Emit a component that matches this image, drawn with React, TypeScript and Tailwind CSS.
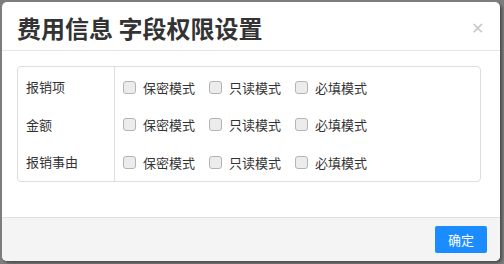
import React from 'react'

const fields = ['报销项', '金额', '报销事由']
const modes = ['保密模式', '只读模式', '必填模式']

const Checkbox: React.FC<{ label: string }> = ({ label }) => (
  <label className="flex items-center">
    <span className="w-[13px] h-[13px] rounded-[3px] border border-[#b4b4b4] bg-[#ececec]" />
    <span className="ml-[7px] text-[13px] text-[#333]">{label}</span>
  </label>
)

export default function App() {
  return (
    <div
      className="w-[504px] h-[264px] bg-[#7d7d7d] pl-[2px] pt-[2px]"
      style={{ fontFamily: '"Noto Sans CJK SC", "Noto Sans", sans-serif' }}
    >
      <div className="w-[498px] h-[259px] bg-white rounded-[5px] overflow-hidden flex flex-col shadow-[2px_2px_3px_rgba(0,0,0,0.4)]">
        <div className="h-[49px] border-b border-[#e5e5e5] flex items-center justify-between pl-[15px] pr-[16px] shrink-0">
          <h1 className="text-[24px] font-bold text-[#333] leading-none pt-[4px]">
            费用信息 字段权限设置
          </h1>
          <span className="text-[16px] text-[#c8c8c8] leading-none pt-[2px]">✕</span>
        </div>

        <div className="flex-1 pt-[15px] pl-[15px]">
          <div className="w-[464px] h-[116px] border border-[#dddddd] rounded-[4px] flex">
            <div className="w-[97px] border-r border-[#dddddd] flex flex-col pt-[1px]">
              {fields.map(f => (
                <div key={f} className="h-[38px] flex items-center pl-[8px] text-[13px] text-[#333]">
                  {f}
                </div>
              ))}
            </div>
            <div className="flex-1 flex flex-col pt-[2px]">
              {fields.map(f => (
                <div key={f} className="h-[38px] flex items-center pl-[8px] gap-[14px]">
                  {modes.map(m => (
                    <Checkbox key={m} label={m} />
                  ))}
                </div>
              ))}
            </div>
          </div>
        </div>

        <div className="h-[44px] shrink-0 border-t border-[#e0e0e0] bg-[#f4f4f4] flex items-start justify-end pr-[13px] pt-[8px]">
          <button className="w-[52px] h-[27px] rounded-[2px] bg-[#1a8cff] text-white text-[13px]">
            确定
          </button>
        </div>
      </div>
    </div>
  )
}
